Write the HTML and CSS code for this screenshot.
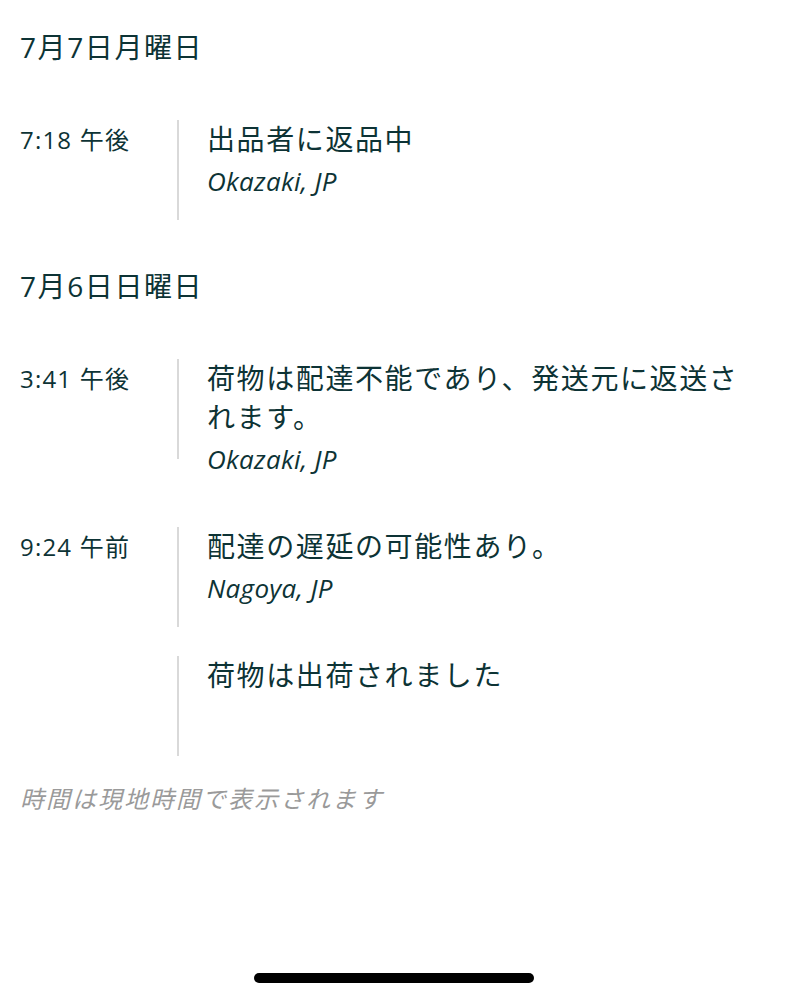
FILE: index.html
```html
<!DOCTYPE html>
<html>
<head>
  <meta charset="utf-8">
  <title>配送状況</title>
  <link rel="stylesheet" href="styles.css">
</head>
<body>
  <div class="tracking">
    <div class="day">
      <h2 class="day-title">7月7日月曜日</h2>
      <div class="event">
        <div class="event-time">7:18 午後</div>
        <div class="event-rule"></div>
        <div class="event-body">
          <div class="event-text">出品者に返品中</div>
          <div class="event-place">Okazaki, JP</div>
        </div>
      </div>
    </div>

    <div class="day">
      <h2 class="day-title">7月6日日曜日</h2>
      <div class="event">
        <div class="event-time">3:41 午後</div>
        <div class="event-rule"></div>
        <div class="event-body">
          <div class="event-text">荷物は配達不能であり、発送元に返送されます。</div>
          <div class="event-place">Okazaki, JP</div>
        </div>
      </div>
      <div class="event">
        <div class="event-time">9:24 午前</div>
        <div class="event-rule"></div>
        <div class="event-body">
          <div class="event-text">配達の遅延の可能性あり。</div>
          <div class="event-place">Nagoya, JP</div>
        </div>
      </div>
      <div class="event">
        <div class="event-time"></div>
        <div class="event-rule"></div>
        <div class="event-body">
          <div class="event-text">荷物は出荷されました</div>
        </div>
      </div>
    </div>

    <p class="note">時間は現地時間で表示されます</p>
  </div>

  <div class="home-bar"></div>
</body>
</html>
```

FILE: styles.css
```css
body {
  margin: 0;
  padding: 0;
  background: #fff;
  color: #0d3335;
  font-family: "Open Sans", "Noto Sans CJK JP", sans-serif;
  height: 999px;
  position: relative;
}
.tracking {
  padding: 28px 20px 0 20px;
}
.day + .day {
  padding-top: 18px;
}
.day-title {
  margin: 0 0 53px 0;
  font-size: 28px;
  font-weight: normal;
  line-height: 39px;
  letter-spacing: 1.6px;
}
.event {
  display: flex;
  margin-bottom: 28px;
}
.event-time {
  width: 157px;
  flex-shrink: 0;
  font-size: 24px;
  line-height: 39px;
  letter-spacing: 1.2px;
}
.event-rule {
  width: 2px;
  height: 100px;
  flex-shrink: 0;
  background: #d9d9d9;
}
.event-body {
  padding: 0 0 24px 28px;
  min-width: 0;
  flex: 1;
}
.event-text {
  font-size: 28px;
  line-height: 39px;
  letter-spacing: 1.6px;
}
.event-place {
  margin-top: 6px;
  font-size: 26px;
  font-style: italic;
  line-height: 32px;
  letter-spacing: 0.3px;
}
.note {
  margin: 4px 0 0 0;
  color: #9a9a9a;
  font-size: 24px;
  font-style: italic;
  line-height: 30px;
  letter-spacing: 2px;
}
.home-bar {
  position: absolute;
  left: 254px;
  top: 973px;
  width: 280px;
  height: 10px;
  border-radius: 5px;
  background: #000;
}
```
